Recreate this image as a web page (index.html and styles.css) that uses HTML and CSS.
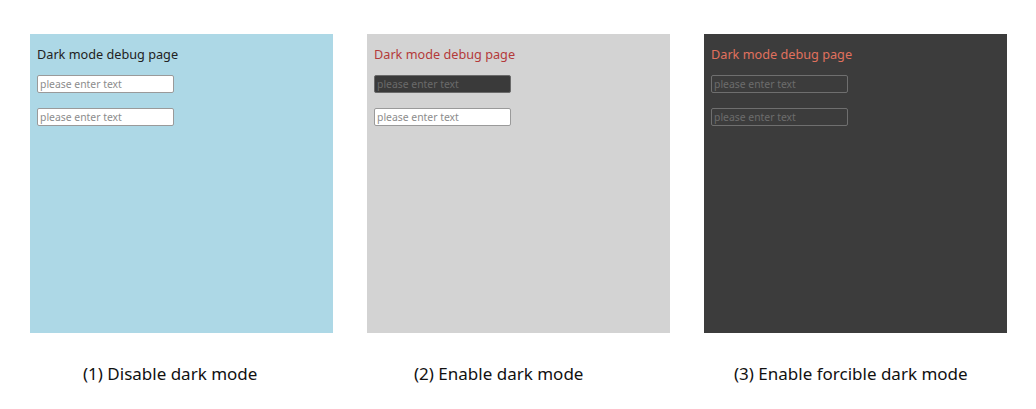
FILE: index.html
```html
<!DOCTYPE html>
<html>
<head>
<meta charset="utf-8">
<link rel="stylesheet" href="styles.css">
</head>
<body>
<div class="figures">
  <div class="figure">
    <div class="panel panel-light">
      <div class="title">Dark mode debug page</div>
      <div class="field">please enter text</div>
      <div class="field">please enter text</div>
    </div>
    <div class="caption cap1">(1) Disable dark mode</div>
  </div>
  <div class="figure">
    <div class="panel panel-gray">
      <div class="title">Dark mode debug page</div>
      <div class="field field-dark">please enter text</div>
      <div class="field">please enter text</div>
    </div>
    <div class="caption cap2">(2) Enable dark mode</div>
  </div>
  <div class="figure">
    <div class="panel panel-dark">
      <div class="title">Dark mode debug page</div>
      <div class="field">please enter text</div>
      <div class="field">please enter text</div>
    </div>
    <div class="caption cap3">(3) Enable forcible dark mode</div>
  </div>
</div>
</body>
</html>
```

FILE: styles.css
```css
html, body {
  margin: 0;
  padding: 0;
  background: #ffffff;
}
.figures {
  display: flex;
  gap: 34px;
  padding: 34px 0 0 30px;
}
.figure {
  width: 303px;
  display: flex;
  flex-direction: column;
}
.panel {
  height: 299px;
  box-sizing: border-box;
  padding: 12px 0 0 7px;
  display: flex;
  flex-direction: column;
  font-family: "Noto Sans", "DejaVu Sans", sans-serif;
}
.title {
  font-size: 12.7px;
  line-height: 16px;
  height: 16px;
  margin-bottom: 13px;
}
.field {
  width: 137px;
  height: 18px;
  box-sizing: border-box;
  border: 1px solid #9a9a9a;
  border-radius: 2px;
  background: #ffffff;
  color: #8c8c8c;
  font-size: 10.4px;
  line-height: 16px;
  padding-left: 2px;
  margin-bottom: 15px;
}
.panel-light { background: #add8e6; }
.panel-light .title { color: #222; }
.panel-gray { background: #d3d3d3; }
.panel-gray .title { color: #b33a3a; }
.panel-gray .field-dark {
  background: #3a3a3a;
  border-color: #6a6a6a;
  color: #6a6a6a;
}
.panel-dark { background: #3c3c3c; }
.panel-dark .title { color: #e0715e; }
.panel-dark .field {
  background: #3c3c3c;
  border-color: #6f6f6f;
  color: #6c6c6c;
}
.caption {
  margin-top: 30px;
  font-family: "Noto Sans", "DejaVu Sans", sans-serif;
  font-size: 17px;
  line-height: 22px;
  color: #111;
  white-space: nowrap;
}
.cap1 { padding-left: 53px; }
.cap2 { padding-left: 47px; }
.cap3 { padding-left: 30px; }
```
